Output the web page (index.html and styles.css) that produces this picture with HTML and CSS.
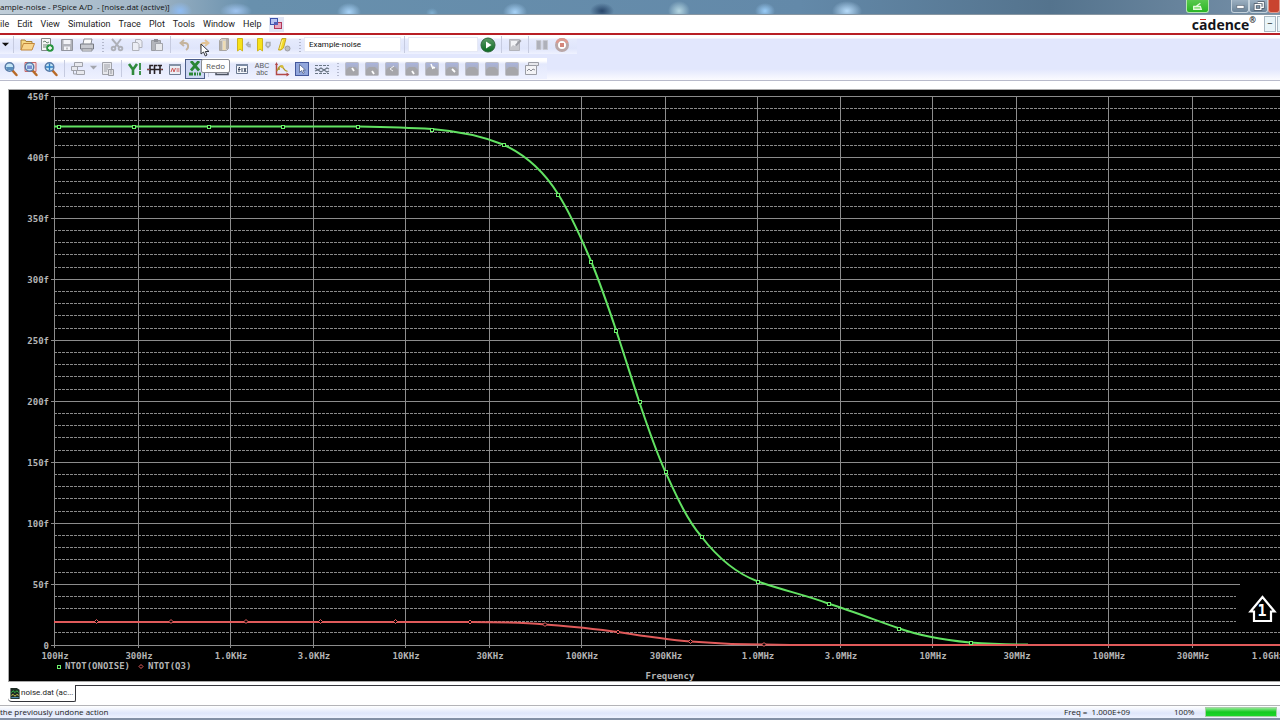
FILE: index.html
```html
<!DOCTYPE html>
<html lang="en">
<head>
<meta charset="utf-8">
<title>Example-noise - PSpice A/D - [noise.dat (active)]</title>
<link rel="stylesheet" href="styles.css">
</head>
<body>
<svg class="defs" aria-hidden="true">
  <defs>
    <linearGradient id="gPlot" x1="0" y1="0" x2="0" y2="1"><stop offset="0" stop-color="#a9b4e0"/><stop offset=".6" stop-color="#abadb8"/><stop offset="1" stop-color="#a4a4a8"/></linearGradient>
    <linearGradient id="gPlay" x1="0" y1="0" x2="0" y2="1"><stop offset="0" stop-color="#5c9a68"/><stop offset="1" stop-color="#086a20"/></linearGradient>
    <symbol id="plot" viewBox="0 0 16 16"><rect x="1.500" y="1.500" width="13" height="13" rx="1" fill="url(#gPlot)" stroke="#bcbdc6"/><path d="M2 14V9l3-3h6l3 3v5z" fill="#a6a6aa"/></symbol>
    <symbol id="lens" viewBox="0 0 16 16"><path d="M9.500 9.500l4 4.500" stroke="#b86a28" stroke-width="2.500" stroke-linecap="round"/><circle cx="6.500" cy="6" r="4.300" fill="#c5e6f6" stroke="#5779a5" stroke-width="1.400"/></symbol>
    <symbol id="bookmark" viewBox="0 0 16 16"><path d="M1.500 1.500h5v12.500l-2.500-2-2.500 2z" fill="#f7e21a" stroke="#d0b51c"/></symbol>
  </defs>
</svg>
<div class="app">
  <header class="titlebar">
    <h1 class="title">ample-noise - PSpice A/D&nbsp; - [noise.dat (active)]</h1>
    <div class="winbtns">
      <button class="win win-green" aria-label="Share"><svg viewBox="0 0 22 12"><path d="M7 6.500h7l1 3H7zM10 6l4-3" fill="#8ee27e" stroke="#e6f9df" stroke-width="1.300"/></svg></button>
      <button class="win win-min" aria-label="Minimize"><svg viewBox="0 0 18 12"><rect x="5.500" y="5.500" width="8" height="3" fill="#fff" stroke="#56606c" stroke-width=".6"/></svg></button>
      <button class="win win-max" aria-label="Restore"><svg viewBox="0 0 18 12"><path d="M8 2.500h6v5h-2M5.500 4.500h6v5h-6z" fill="none" stroke="#4d5866" stroke-width="3"/><path d="M8 2.500h6v5h-2M5.500 4.500h6v5h-6z" fill="none" stroke="#fff" stroke-width="1.400"/></svg></button>
      <button class="win win-close" aria-label="Close"></button>
    </div>
  </header>
  <nav class="menubar">
    <button class="menu">ile</button><button class="menu">Edit</button><button class="menu">View</button><button class="menu">Simulation</button><button class="menu">Trace</button><button class="menu">Plot</button><button class="menu">Tools</button><button class="menu">Window</button><button class="menu">Help</button>
    <button class="menu-icon" aria-label="Cascade"><svg viewBox="0 0 14 14"><rect x="1.500" y="1.500" width="7" height="6" fill="#b8c4f0" stroke="#3c52ab"/><rect x="5.500" y="5.500" width="7" height="6" fill="#e9a6bb" stroke="#b13959"/><rect x="5" y="5" width="4" height="3" fill="#5360b6"/></svg></button>
    <div class="brand">c<span class="macron">a</span>dence<sup>®</sup></div>
    <button class="mdi" aria-label="Minimize document">–</button><button class="mdi mdi-cut" aria-label="Restore document"></button>
  </nav>
  <div class="toolbars">
    <div class="toolbar">
      <button class="tb tb-arrow" aria-label="More"><svg viewBox="0 0 10 16"><path d="M1 6h8l-4 4z" fill="#111"/></svg></button>
      <i class="sep"></i>
      <button class="tb" aria-label="Open"><svg viewBox="0 0 16 16"><path d="M2 13V3h4l1 1.500h6V7" fill="#f5d987" stroke="#a98039"/><path d="M2 13l2.500-6.500h11L13 13z" fill="#f8d58c" stroke="#c2863a"/></svg></button>
      <button class="tb" aria-label="Append file"><svg viewBox="0 0 16 16"><path d="M2.500 1.500h9v12h-9z" fill="#f5f6f6" stroke="#83898b"/><path d="M4 5l2-1 2 2 2-1M4 8h6M4 10h4" fill="none" stroke="#6e8877"/><circle cx="11" cy="11" r="3.800" fill="#26943e"/><path d="M11 9v4M9 11h4" stroke="#fff" stroke-width="1.300"/></svg></button>
      <button class="tb" aria-label="Save"><svg viewBox="0 0 16 16"><path d="M2.500 2.500h11v11h-11z" fill="#b1b3ba" stroke="#92959e"/><path d="M4.500 3h7v4h-7zM5 9.500h6V13H5z" fill="#f2f3f7"/><path d="M8 10.500v2" stroke="#888"/></svg></button>
      <button class="tb" aria-label="Print"><svg viewBox="0 0 16 16"><path d="M4 7l1-5h8l-1 5" fill="#fafafa" stroke="#8a8d95"/><path d="M1.500 7h13v5h-13z" fill="#c7c9cf" stroke="#777a82"/><path d="M3 12h10v2H3z" fill="#eee" stroke="#8a8d95"/></svg></button>
      <i class="grip"></i>
      <button class="tb" aria-label="Cut"><svg viewBox="0 0 16 16" fill="none" stroke="#aeb0b8" stroke-width="1.900"><path d="M3 2l7 8M12 2l-6 8"/><circle cx="4.500" cy="11.500" r="1.800"/><circle cx="11.500" cy="11.500" r="1.800"/></svg></button>
      <button class="tb" aria-label="Copy"><svg viewBox="0 0 16 16" fill="#eceef5" stroke="#b0b2ba"><path d="M6.500 2.500h5l1.500 2v6H6.500z"/><path d="M3.500 5.500h5l1.500 2v6H3.500z"/></svg></button>
      <button class="tb" aria-label="Paste"><svg viewBox="0 0 16 16"><path d="M2.500 3.500h9v10h-9z" fill="#b3b5bb" stroke="#9a9ca3"/><path d="M5 2h4v3H5z" fill="#8e9097"/><path d="M6.500 6.500h7v7h-7z" fill="#e8e9ed" stroke="#a3a5ac"/></svg></button>
      <i class="sep"></i>
      <button class="tb" aria-label="Undo"><svg viewBox="0 0 16 16" fill="none" stroke="#c5b49d" stroke-width="1.900"><path d="M8 3L4.500 6 8 9M5 6h4c4 0 4 5 1 7"/></svg></button>
      <span class="tipwrap">
        <button class="tb" aria-label="Redo"><svg viewBox="0 0 16 16" fill="none" stroke="#e2c395" stroke-width="1.900"><path d="M9 3l3.500 3L9 9M12 6H8c-4 0-4 5-1 7"/></svg></button>
        <svg class="cursor" viewBox="0 0 10 14"><path d="M1 1v10l2.500-2 1.800 4 1.700-1-1.700-3.500H9z" fill="#fff" stroke="#30343c"/></svg>
        <span class="tip" role="tooltip">Redo</span>
      </span>
      <button class="tb" aria-label="Bookmarks"><svg viewBox="0 0 16 16"><path d="M3.500 3.500l2-2h7v10l-2 2h-7z" fill="#d3cfc8" stroke="#a8a5a2"/><path d="M5 4v9M11 2v10" stroke="#aaa7a4" stroke-width="1.600"/><path d="M7 4h2.500v9H7z" fill="#eedcb4"/></svg></button>
      <button class="tb" aria-label="Previous bookmark"><svg viewBox="0 0 16 16"><use href="#bookmark"/><path d="M13 5l-2.500 2.500L13 10M11 7.500h3v3" fill="none" stroke="#aaaeb5" stroke-width="1.500"/></svg></button>
      <button class="tb" aria-label="Next bookmark"><svg viewBox="0 0 16 16"><use href="#bookmark"/><path d="M10.500 5.500h3.500v3l-2 2-2-2z" fill="#d7d9df" stroke="#aaaeb5" stroke-width="1.500"/></svg></button>
      <button class="tb" aria-label="Clear bookmarks"><svg viewBox="0 0 16 16"><path d="M6 1.500h4L7.500 11 5 13H2.500z" fill="#f3da28" stroke="#c4a72a"/><path d="M6.500 3L4 12" stroke="#fff59a"/><circle cx="11.500" cy="11.500" r="2.500" fill="#bcbec4" stroke="#999ba2"/></svg></button>
      <i class="grip"></i>
      <input class="box box-name" aria-label="Simulation profile" value="Example-noise">
      <i class="sep"></i>
      <input class="box box-time" aria-label="Run until">
      <button class="tb" aria-label="Run"><svg viewBox="0 0 16 16"><circle cx="8" cy="8" r="7" fill="url(#gPlay)" stroke="#2e663c"/><path d="M6 4.500l5.500 3.500L6 11.500z" fill="#fff"/></svg></button>
      <i class="sep"></i>
      <button class="tb" aria-label="Edit profile"><svg viewBox="0 0 16 16"><path d="M2.500 2.500h10v11h-10z" fill="#c6c7cc" stroke="#b2b3ba"/><path d="M4 4h6v3l-2 2-2-1-2 2z" fill="#f2f3f6"/><path d="M8 8l5-5.500 1.500 1.500-5 5z" fill="#999ba2"/></svg></button>
      <i class="sep"></i>
      <button class="tb" aria-label="Pause"><svg viewBox="0 0 16 16" fill="#afb1ba" stroke="#c9cbd3"><path d="M2.500 3.500h4.500v9H2.500zM9 3.500h4.500v9H9z"/></svg></button>
      <button class="tb" aria-label="Stop"><svg viewBox="0 0 16 16"><circle cx="8" cy="8" r="5.500" fill="#fff" stroke="#b9a7a8" stroke-width="3"/><path d="M2.800 6a5.500 5.500 0 0 1 10.400 0" stroke="#dd9a90" stroke-width="2.600" fill="none"/><path d="M6 6h4v4H6z" fill="#d4867a"/></svg></button>
    </div>
    <div class="toolbar toolbar-2">
      <button class="tb" aria-label="Zoom out"><svg viewBox="0 0 16 16"><use href="#lens"/><path d="M3 6h7v3H4z" fill="#5b8fbd"/></svg></button>
      <button class="tb" aria-label="Zoom area"><svg viewBox="0 0 16 16"><path d="M2 1.500h11v9H2z" fill="#f8dede" stroke="#c96969"/><use href="#lens"/><path d="M4 4.500h5v3.500H4z" fill="#7b8ed0"/></svg></button>
      <button class="tb" aria-label="Zoom fit"><svg viewBox="0 0 16 16"><use href="#lens"/><path d="M6.500 2.500v7M3 6h7" stroke="#2d7dc3" stroke-width="1.400"/></svg></button>
      <i class="sep"></i>
      <button class="tb" aria-label="Schematic"><svg viewBox="0 0 16 16" fill="#e8e9ee" stroke="#a0a2aa"><path d="M4.500 1.500h8v4h-8zM1.500 5.500h6v4h-6zM6.500 9.500h8v4h-8z"/><path d="M3.500 10v3H6" fill="none"/></svg></button>
      <button class="tb tb-arrow" aria-label="Schematic options"><svg viewBox="0 0 10 16"><path d="M1 5h8l-4 4z" fill="#a4a6ad"/></svg></button>
      <button class="tb" aria-label="Output file"><svg viewBox="0 0 16 16"><path d="M2.500 1.500h9v12h-9z" fill="#e7e8ec" stroke="#a0a2a9"/><path d="M4 4h6M4 6h6M4 8h4M4 10h3" stroke="#9fa1a8"/><path d="M8.500 8.500h5v6h-5z" fill="#e2e2e5" stroke="#999ba2"/><path d="M10 10h2M11 11v2" stroke="#999ba2"/></svg></button>
      <i class="sep"></i>
      <button class="tb" aria-label="Log Y axis"><svg viewBox="0 0 16 16"><path d="M2 3l4 5.500L10 3M6 8v6" fill="none" stroke="#2f8a3c" stroke-width="2.600"/><path d="M13 2v12" stroke="#2f8a3c" stroke-width="1.800" stroke-dasharray="7 1"/></svg></button>
      <button class="tb" aria-label="Fourier"><svg viewBox="0 0 16 16"><path d="M3 13V4.500h3M7.500 13V4.500h3M11 4.500h4M13 4v9M0 8.500h16" fill="none" stroke="#262024" stroke-width="1.600"/><path d="M0 8.500h3M13.500 8.500h2" stroke="#8e4848"/></svg></button>
      <button class="tb" aria-label="Performance analysis"><svg viewBox="0 0 16 16"><path d="M2.500 3.500h11v10h-11z" fill="#eceff5" stroke="#6f7c91"/><path d="M2 3h12v2H2z" fill="#8391a6"/><path d="M4 11l1.500-4L7 11l1.500-4M9.500 8h3M9.500 10h3" fill="none" stroke="#cc5858"/></svg></button>
      <button class="tb tb-on" aria-label="Log X axis"><svg viewBox="0 0 16 16"><path d="M4 0l8 9.500M12 0L4 9.500" stroke="#2a8634" stroke-width="2.800"/><path d="M2 13h12" stroke="#2a8634" stroke-width="3" stroke-dasharray="4 1 2 1 1 1"/></svg></button>
      <i class="sep"></i>
      <button class="tb" aria-label="Add trace"><svg viewBox="0 0 16 16"><path d="M2 2.500h12v11H2z" fill="#e0e3ec" stroke="#4b5260" stroke-width="1.500"/></svg></button>
      <button class="tb" aria-label="Evaluate function"><svg viewBox="0 0 16 16"><path d="M2.500 3.500h11v9h-11z" fill="#f6f8fc" stroke="#6a7890"/><path d="M2 3h12v2H2z" fill="#7b8ba5"/><path d="M6 6.500H5V11M4 8.500h2.500M8 7v4M10 7l2 4M12 7l-2 4" fill="none" stroke="#38455c"/></svg></button>
      <button class="tb tb-text" aria-label="Text label"><span>ABC</span><span>abc</span></button>
      <button class="tb" aria-label="Mark data points"><svg viewBox="0 0 16 16"><path d="M2.500 3v10.500H14" fill="none" stroke="#b24a49" stroke-width="1.500"/><path d="M1 4l1.500-3L4 4zM12.500 11.500l3 2-3 2z" fill="#b24a49"/><path d="M3 10c2-5 4-6 5.500-4s3 5 5 4" fill="none" stroke="#b19a2d" stroke-width="1.300"/><circle cx="8" cy="5.500" r="1.500" fill="#d7be3a"/><circle cx="5" cy="8" r="1" fill="#a88b26"/></svg></button>
      <button class="tb" aria-label="Toggle cursor"><svg viewBox="0 0 16 16"><rect x="1.500" y="1.500" width="13" height="13" fill="#91a6dc" stroke="#44589c"/><path d="M5.500 3.500v8l2-2 1.500 3 1.300-.6L9 9h2.500z" fill="#fff" stroke="#506087" stroke-width=".8"/></svg></button>
      <button class="tb" aria-label="Cursor styles"><svg viewBox="0 0 16 16" fill="none" stroke="#6b7785" stroke-width="1.200"><path d="M1 4.500h14M1 12.500h14" stroke-dasharray="3 1"/><path d="M1 7l3 2 3-2 3 2 3-2 2 1M1 10l3-1 3 2 3-2 3 2 2-1"/></svg></button>
      <i class="grip"></i>
      <button class="tb" aria-label="Cursor peak"><svg viewBox="0 0 16 16"><use href="#plot"/><path d="M8 7l2 3" stroke="#fff" stroke-width="1.800"/></svg></button>
      <button class="tb" aria-label="Cursor trough"><svg viewBox="0 0 16 16"><use href="#plot"/><path d="M8 10l2 3" stroke="#fff" stroke-width="1.800"/></svg></button>
      <button class="tb" aria-label="Cursor slope"><svg viewBox="0 0 16 16"><use href="#plot"/><path d="M10 5L6 8l3 2" fill="none" stroke="#f2f2f5"/></svg></button>
      <button class="tb" aria-label="Cursor min"><svg viewBox="0 0 16 16"><use href="#plot"/><path d="M8 10l2 3" stroke="#fff" stroke-width="1.800"/></svg></button>
      <button class="tb" aria-label="Cursor max"><svg viewBox="0 0 16 16"><use href="#plot"/><path d="M7 3l2 5M9 6l2 1" stroke="#fff" stroke-width="1.500"/></svg></button>
      <button class="tb" aria-label="Cursor point"><svg viewBox="0 0 16 16"><use href="#plot"/><path d="M8 8l3 3" stroke="#fff" stroke-width="1.800"/></svg></button>
      <button class="tb" aria-label="Cursor search"><svg viewBox="0 0 16 16"><use href="#plot"/></svg></button>
      <button class="tb" aria-label="Next transition"><svg viewBox="0 0 16 16"><use href="#plot"/></svg></button>
      <button class="tb" aria-label="Previous transition"><svg viewBox="0 0 16 16"><use href="#plot"/></svg></button>
      <button class="tb" aria-label="Mark label"><svg viewBox="0 0 16 16"><path d="M4.500 5V1.500h10v3h-2" fill="#e6e7ec" stroke="#9b9da5"/><path d="M1.500 4.500h11v9h-11z" fill="#f3f3f6" stroke="#9b9da5"/><path d="M3 10l2-2 2 2 2-2 2 1" fill="none" stroke="#898b93"/></svg></button>
    </div>
  </div>
  <main class="plotarea">
    <svg class="chart" viewBox="9 90 1271 591" preserveAspectRatio="xMinYMin meet" role="img" aria-label="Noise against frequency">
      <path class="minor" d="M54 108h1226M54 120h1226M54 132h1226M54 145h1226M54 169h1226M54 181h1226M54 193h1226M54 206h1226M54 230h1226M54 242h1226M54 254h1226M54 267h1226M54 291h1226M54 303h1226M54 315h1226M54 328h1226M54 352h1226M54 364h1226M54 376h1226M54 389h1226M54 413h1226M54 425h1226M54 437h1226M54 450h1226M54 474h1226M54 486h1226M54 498h1226M54 511h1226M54 535h1226M54 547h1226M54 559h1226M54 572h1226M54 596h1182M54 608h1182M54 621h1182M54 632h1226"/>
      <path class="major" d="M51 96h1229M51 157h1229M51 218h1229M51 279h1229M51 340h1229M51 401h1229M51 462h1229M51 523h1229M51 584h1189M51 645h1229M54 96v552M138 96v552M230 96v552M313 96v552M405 96v552M489 96v552M581 96v552M665 96v552M757 96v552M840 96v552M932 96v552M1016 96v552M1108 96v552M1192 96v552"/>
      <g class="lbl lbl-y">
        <text x="49" y="100">450f</text><text x="49" y="161">400f</text><text x="49" y="222">350f</text><text x="49" y="283">300f</text><text x="49" y="344">250f</text><text x="49" y="405">200f</text><text x="49" y="466">150f</text><text x="49" y="527">100f</text><text x="49" y="588">50f</text><text x="49" y="649">0</text>
      </g>
      <g class="lbl lbl-x">
        <text x="55" y="659">100Hz</text><text x="139" y="659">300Hz</text><text x="231" y="659">1.0KHz</text><text x="314" y="659">3.0KHz</text><text x="406" y="659">10KHz</text><text x="490" y="659">30KHz</text><text x="582" y="659">100KHz</text><text x="666" y="659">300KHz</text><text x="758" y="659">1.0MHz</text><text x="841" y="659">3.0MHz</text><text x="933" y="659">10MHz</text><text x="1017" y="659">30MHz</text><text x="1109" y="659">100MHz</text><text x="1193" y="659">300MHz</text><text x="1268" y="659">1.0GHz</text><text x="670" y="679">Frequency</text>
      </g>
      <g class="lbl"><text x="65" y="669">NTOT(ONOISE)</text><text x="148" y="669">NTOT(Q3)</text></g>
      <path class="green" d="M54 126.500H358C385 127 407 127.500 432 129C462 131.500 482 136 503 144.500C526 155 543 170 558 194C572 216 581 238 591 261C600 283 608 306 616 330C625 357 631 377 639 401C647 425 655 449 665 471C676 495 687 520 701 536C717 557 735 573 758 581.500C781 590 806 595 828 603.500C852 611 875 620 898 628C920 636 944 640 970 642.500C990 644 1008 644.500 1028 644.500"/>
      <path class="red" d="M54 622H395L470 622C497 622 522 622.500 545 624.500C571 626 594 629 618 632C643 636 665 639.500 691 641.500C715 643.500 740 644.500 764 644.500L790 645H1280"/>
      <path class="mark mark-g" d="M57 125h3v3h-3zM132 125h3v3h-3zM207 125h3v3h-3zM281 125h3v3h-3zM356 125h3v3h-3zM430 128h3v3h-3zM502 143h3v3h-3zM556 193h3v3h-3zM589 260h3v3h-3zM614 329h3v3h-3zM638 400h3v3h-3zM664 470h3v3h-3zM700 535h3v3h-3zM756 580h3v3h-3zM827 602h3v3h-3zM897 627h3v3h-3zM969 641h3v3h-3z"/>
      <path class="mark mark-g" d="M57 665h3v3h-3z"/>
      <path class="mark mark-r" d="M94.500 621.500l2-2 2 2-2 2zM169 621.500l2-2 2 2-2 2zM244 621.500l2-2 2 2-2 2zM318.500 621.500l2-2 2 2-2 2zM393.500 621.500l2-2 2 2-2 2zM468 622l2-2 2 2-2 2zM543 624.500l2-2 2 2-2 2zM616 632l2-2 2 2-2 2zM688.500 641.500l2-2 2 2-2 2zM762 644.500l2-2 2 2-2 2zM139 666.500l2-2 2 2-2 2z"/>
      <path d="M1262.500 597l-12 14.500h3.500v9.500h17v-9.500h3.500z" fill="#000" stroke="#fff" stroke-width="2.200"/>
      <text class="arrow-num" x="1262" y="616">1</text>
    </svg>
  </main>
  <div class="tabs">
    <button class="tab"><svg viewBox="0 0 10 12"><path d="M0 0h7l3 2v10H0z" fill="#1d2d24"/><path d="M1 5l2-2 2 2 2-2 2 2" fill="none" stroke="#36cf4c"/><path d="M1 8l2-1 2 2 2-2 2 1" fill="none" stroke="#e3d654"/><path d="M1 10.500h8" stroke="#5a9fd0"/></svg><span>noise.dat (ac...</span></button>
    <div class="tabline"></div>
  </div>
  <footer class="status">
    <span class="status-msg">the previously undone action</span>
    <span class="status-freq">Freq =&nbsp; 1.000E+09</span>
    <span class="status-pct">100%</span>
    <span class="progress" role="progressbar" aria-valuenow="100"></span>
  </footer>
</div>
</body>
</html>
```
FILE: styles.css
```css
* { box-sizing: border-box; }
body { margin: 0; font: 8px/12px "Open Sans", "Noto Sans", sans-serif; color: #1c1c22; background: #fff; }
button { padding: 0; border: 0; background: none; font: inherit; color: inherit; }
svg { display: block; }
.defs { position: absolute; width: 0; height: 0; }
.app { display: flex; flex-direction: column; min-height: 100vh; overflow: hidden; }

.titlebar {
  display: flex; justify-content: space-between; height: 15px; border-bottom: 1px solid #8796a2;
  background:
    radial-gradient(ellipse 12px 9px at 180px 11px, #8fbcf4, transparent),
    radial-gradient(ellipse 16px 8px at 236px 11px, #9fc4f0, transparent),
    radial-gradient(ellipse 12px 9px at 349px 12px, #a8d3f8, transparent),
    radial-gradient(ellipse 6px 5px at 432px 13px, #7eaed0, transparent),
    radial-gradient(ellipse 12px 9px at 515px 12px, #a8d3f8, transparent),
    radial-gradient(ellipse 12px 8px at 602px 11px, #28466a, transparent),
    radial-gradient(ellipse 11px 10px at 679px 11px, #b5d6e2, transparent),
    radial-gradient(ellipse 10px 8px at 765px 11px, #9bcdf8, transparent),
    radial-gradient(ellipse 15px 10px at 847px 11px, #b8dcfa, transparent),
    linear-gradient(90deg, #c0ced9, #9fb4c5 150px, #6890ad 250px, #6389a9 800px, #54738d 1050px, #7690a8);
}
.title { margin: 0; font-size: 8px; font-weight: 400; line-height: 14px; white-space: nowrap; color: #111; }
.winbtns { display: flex; }
.win { width: 18px; height: 13px; border: 1px solid #c4d2dc; border-top: 0; border-radius: 0 0 3px 3px; background: linear-gradient(#9cb0c1, #6b8398); }
.win svg { width: 100%; height: 12px; }
.win-green { width: 23px; margin-right: 22px; background: linear-gradient(#59c94d, #2bb524); border-color: #b4e5b0; }
.win-max { width: 19px; }
.win-close { width: 12px; background: #c9442f; border-color: #e09a8c; }

.menubar { display: flex; align-items: center; gap: 8px; height: 20px; border-bottom: 2px solid #b81f25; background: #fff; font: 9px/17px Roboto, "Noto Sans", sans-serif; }
.menu-icon { width: 15px; height: 15px; background: #e2e6f5; }
.menu-icon svg { width: 14px; height: 14px; }
.brand { display: flex; margin-left: auto; font: bold 14px/17px "Open Sans", sans-serif; color: #15151a; }
.brand sup { font-size: 8px; line-height: 8px; }
.macron { background: linear-gradient(#d2232a, #d2232a) 1px 3px / 6px 1px no-repeat; }
.mdi { width: 12px; height: 16px; border: 1px solid #a9b8c2; background: #e9f5f9; line-height: 14px; }
.mdi-cut { width: 3px; margin-left: -7px; border-right: 0; }

.toolbars { height: 46px; border-bottom: 1px solid #b9bbcb; background: linear-gradient(#fff 3px, #e2e7fd 4px, #e2e7fd 34px, #fbfbff 45px); }
.toolbar { display: flex; align-items: center; width: max-content; height: 19px; padding-right: 5px; background: linear-gradient(#fff 3px, #e6ebfd 4px, #dfe5fb 70%, #eff2ff); }
.toolbar-2 { height: 21px; margin-top: 4px; padding-left: 1px; background: linear-gradient(#fff 3px, #e3e8fc 6px, #eef1ff); }
.tb { flex: none; width: 20px; height: 18px; display: grid; place-items: center; }
.tb svg { width: 16px; height: 16px; }
.tb-arrow { width: 10px; }
.tb-arrow svg { width: 9px; height: 15px; }
.tb-on { height: 20px; border: 1px solid #4b5c88; background: #cdd7f3; }
.tb-text { align-content: center; font: 7px/7px "Liberation Sans", sans-serif; color: #555; }
.sep { flex: none; width: 1px; height: 17px; margin: 0 3px; background: #c6cbe0; }
.grip { flex: none; width: 10px; height: 14px; background: radial-gradient(circle, #b4b9cd 1px, transparent 1px) 4px 0 / 4px 3px repeat-y; }
.box { height: 15px; padding: 0 4px; border: 1px solid #e6e9f5; background: #fff; font: 8px/12px Roboto, sans-serif; color: #111; }
.box-name { width: 97px; }
.box-time { width: 70px; }
.tipwrap { position: relative; }
.cursor { position: absolute; left: 6px; top: 7px; width: 10px; height: 14px; z-index: 2; }
.tip { position: absolute; left: 7px; top: 23px; z-index: 1; padding: 0 4px; border: 1px solid #8a8c93; border-radius: 2px; background: #fff; line-height: 12px; color: #555; }

.plotarea { flex: 1; padding: 9px 0 4px 9px; }
.chart { width: 100%; background: #000; outline: 1px solid #a8a8a8; }
.minor { stroke: #8a8a8a; stroke-dasharray: 3 1; shape-rendering: crispEdges; }
.major { stroke: #8c8c8c; fill: none; shape-rendering: crispEdges; }
.lbl { font: bold 9px "DejaVu Sans Mono", monospace; fill: #b4b4b4; }
.lbl-y { text-anchor: end; }
.lbl-x { text-anchor: middle; }
.green { fill: none; stroke: #62e262; stroke-width: 2; }
.red { fill: none; stroke: #e05a5a; stroke-width: 2; }
.mark { fill: #000; stroke-width: 1; }
.mark-g { stroke: #6cf06c; shape-rendering: crispEdges; }
.mark-r { stroke: #e86060; }
.arrow-num { font: bold 15px "DejaVu Sans Mono", monospace; fill: #fff; text-anchor: middle; }

.tabs { display: flex; height: 20px; padding-left: 8px; }
.tab { display: flex; align-items: center; gap: 1px; height: 17px; padding: 0 2px; border: solid #33343a; border-width: 0 1px 1px 0; border-radius: 0 0 2px 4px; font: 8px/12px Roboto, sans-serif; white-space: nowrap; }
.tab svg { width: 10px; height: 11px; }
.tabline { flex: 1; border-top: 1px solid #33343a; }
.status { display: flex; align-items: center; height: 15px; border-top: 1px solid #b4b4b8; border-bottom: 2px solid #8390a5; background: linear-gradient(#fff, #dfe6fa 60%, #eef2ff); line-height: 12px; }
.status-msg { flex: 1; }
.status-freq { width: 110px; }
.status-pct { width: 31px; }
.progress { width: 72px; height: 10px; margin-right: 3px; border: 1px solid #a5cfa5; background: linear-gradient(#8fe892, #14c922 50%, #1bd62b); }
```
